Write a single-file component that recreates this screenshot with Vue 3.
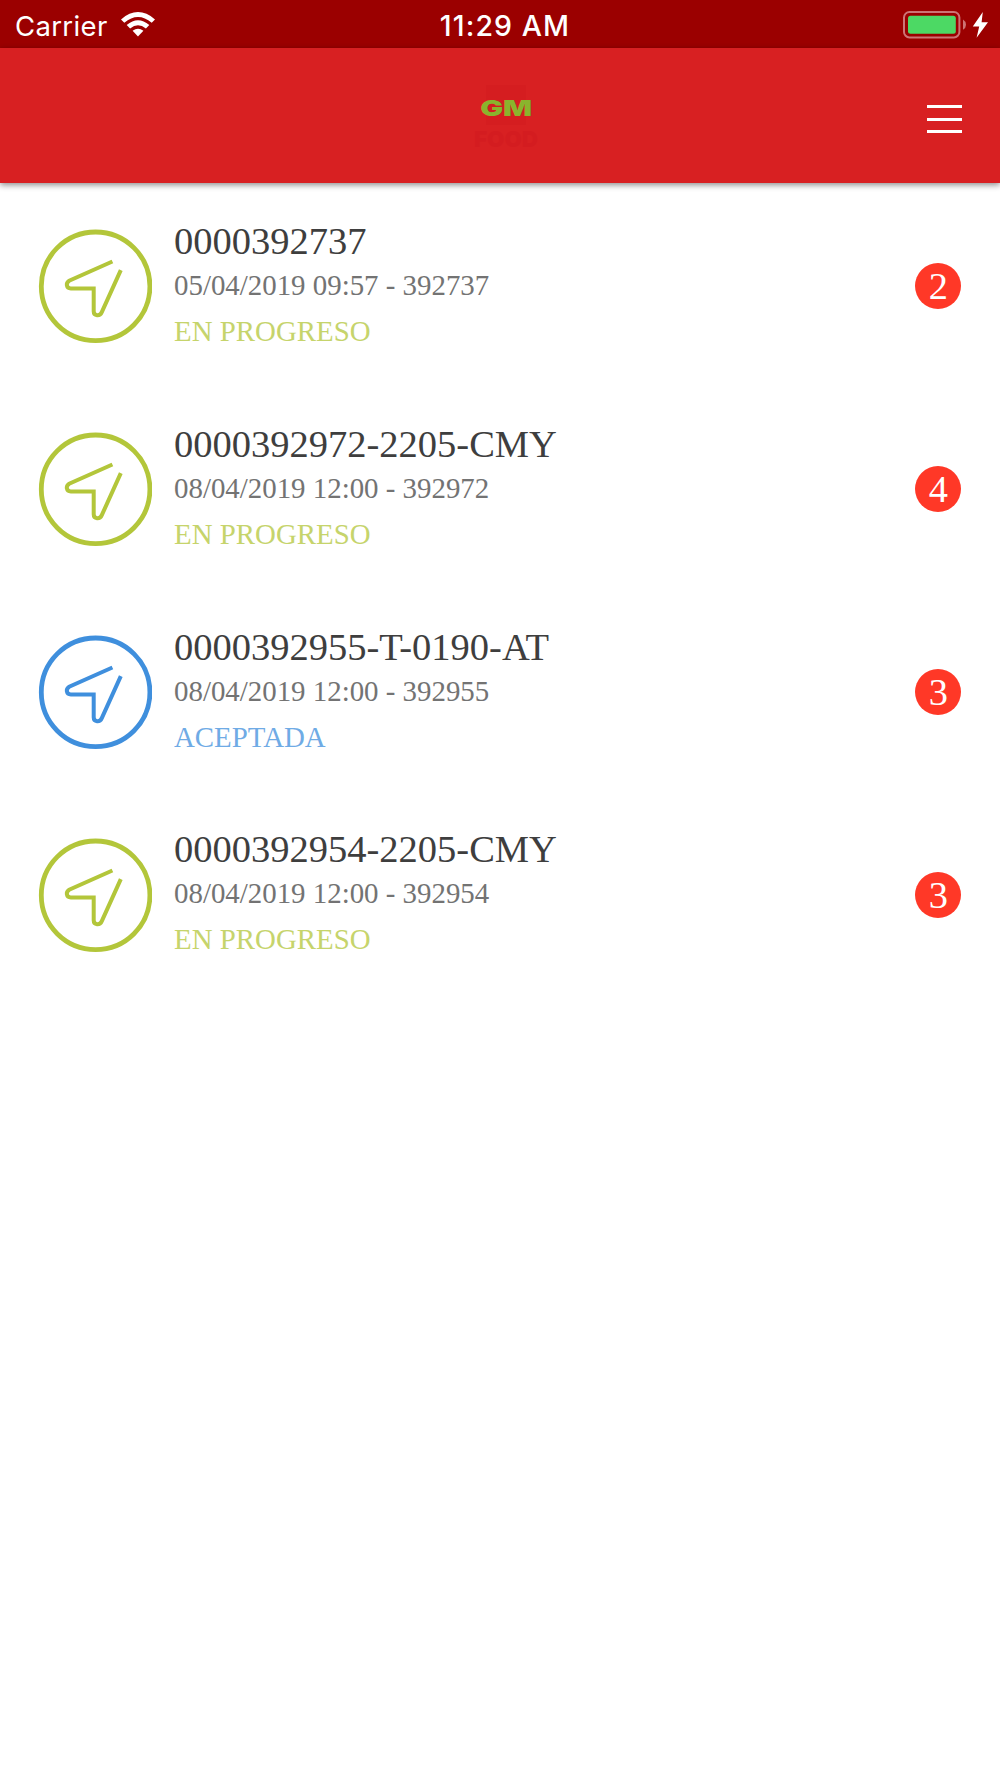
<template>
	<div class='screen'>
		<div class='statusBar'>
			<div class='carrier'>
				<span class='carrierName'>Carrier</span>
				<svg class='wifi' viewBox="0 0 34 25" width="34" height="25">
					<path d="M0 7.4Q17 -7.2 34 7.4L30.7 10.8Q17 -1 3.3 10.8Z" />
					<path d="M5.7 13Q17 3.4 28.3 13L24.9 16.4Q17 10 9.1 16.4Z" />
					<path d="M11.6 18.8Q17 14.9 22.4 18.8L17 24.5Z" />
				</svg>
			</div>
			<div class='time'>11:29 AM</div>
			<div class='power'>
				<svg viewBox="0 0 86 28" width="86" height="28">
					<rect x="1" y="1" width="55.4" height="25.4" rx="5.5" class='batteryShell' />
					<rect x="5" y="4.8" width="47.8" height="18" rx="2.5" class='batteryLevel' />
					<path d="M60 8.6Q63 10.5 63 13.7T60 18.8Z" class='batteryTip' />
					<path d="M79.8 1L69.8 15.5H76.2L73.6 26.8L85 11.2H78.6Z" fill="#fff" />
				</svg>
			</div>
		</div>

		<header class='header'>
			<svg class='logo' viewBox="0 0 70 80" width="70" height="80">
				<rect x="15" y="5" width="40" height="40" class='logoBox' />
				<text x="9.2" y="36" textLength="52" lengthAdjust="spacingAndGlyphs" class='logoMain'>GM</text>
				<text x="3" y="67" textLength="64" lengthAdjust="spacingAndGlyphs" class='logoSub'>FOOD</text>
			</svg>
			<button class='menu' aria-label="Menu">
				<span></span>
				<span></span>
				<span></span>
			</button>
		</header>

		<main class='list'>
			<div v-for='order in orders' :key='order.id' class='row' :class='order.state'>
				<svg class='icon' viewBox="-0.6 -0.3 114 114" width="114" height="114">
					<circle cx="57" cy="57" r="54.3" stroke-width="4.8" />
					<path d="M73.8 32.2L30.6 51.4C26.9 53.8 27.6 59.1 32.2 59.1H55.1V82C55.1 86.8 61.2 87.3 63.2 82.8L82.2 40.9" stroke-width="4" />
				</svg>
				<div class='info'>
					<div class='title'>{{order.title}}</div>
					<div class='date'>{{order.date}} - {{order.id}}</div>
					<div class='status'>{{labels[order.state]}}</div>
				</div>
				<div class='badge'>{{order.count}}</div>
			</div>
		</main>
	</div>
</template>

<script setup>
	import { ref } from 'vue'

	const labels = {
		progress: 'EN PROGRESO',
		accepted: 'ACEPTADA',
	}

	const orders = ref([
		{ id: '392737', title: '0000392737', date: '05/04/2019 09:57', state: 'progress', count: 2 },
		{ id: '392972', title: '0000392972-2205-CMY', date: '08/04/2019 12:00', state: 'progress', count: 4 },
		{ id: '392955', title: '0000392955-T-0190-AT', date: '08/04/2019 12:00', state: 'accepted', count: 3 },
		{ id: '392954', title: '0000392954-2205-CMY', date: '08/04/2019 12:00', state: 'progress', count: 3 },
	])
</script>

<style>
	body{ margin: 0; background: #fff; }
</style>

<style scoped>
	.screen{
		min-height: 1778px;
		background: #fff;
		font-family: "Liberation Serif", "Times New Roman", serif;
	}
	.statusBar{
		display: grid;
		grid-template-columns: 1fr auto 1fr;
		align-items: center;
		height: 48px;
		box-sizing: border-box;
		padding: 3px 11px 0 15px;
		background: #9b0000;
		color: #fff;
		font-family: Inter, Roboto, sans-serif;
		font-size: 27.5px;
		line-height: 44px;
	}
	.carrier{ display: flex; align-items: center; gap: 13px; }
	.carrierName{ letter-spacing: 0.35px; }
	.wifi{ fill: #fff; margin-top: -2px; }
	.time{
		margin-left: 6px;
		font-size: 28.5px;
		font-weight: 500;
		letter-spacing: 1.1px;
	}
	.power{ display: flex; justify-content: flex-end; margin-top: -1px; }
	.batteryShell{ fill: none; stroke: #cd7475; stroke-width: 2; }
	.batteryLevel{ fill: #4cd964; }
	.batteryTip{ fill: #cd7475; }

	.header{
		display: grid;
		grid-template-columns: 1fr 70px 1fr;
		height: 135.4px;
		box-sizing: border-box;
		padding: 32px 38px 0 49px;
		background: #d82022;
		box-shadow: 0 2px 6px rgba(0, 0, 0, 0.45);
	}
	.logo{ grid-column: 2; }
	.logoBox{ fill: #d51d20; }
	.logoMain{
		fill: #8ab42d;
		font: 900 22px Inter, sans-serif;
	}
	.logoSub{
		fill: #d41c20;
		font: 900 22px Inter, sans-serif;
	}
	.menu{
		display: flex;
		flex-direction: column;
		justify-self: end;
		gap: 9.6px;
		width: 35px;
		margin-top: 25px;
		padding: 0;
		border: 0;
		background: none;
	}
	.menu span{ height: 3px; background: #fff; }

	.list{ padding-top: 1px; }
	.row{
		display: flex;
		align-items: center;
		height: 202.9px;
		padding: 0 38.6px 0 38px;
	}
	.icon{
		flex: none;
		fill: none;
		stroke: currentColor;
	}
	.info{ flex: 1; padding: 1.8px 0 0 22px; }
	.title{
		color: #3e3e3e;
		font-size: 38.5px;
		line-height: 44px;
	}
	.date{
		color: #737373;
		font-size: 28.88px;
		line-height: 45px;
	}
	.status{
		font-size: 28.88px;
		line-height: 47px;
		opacity: 0.75;
	}
	.progress{ color: #b3c63a; }
	.accepted{ color: #3f8fdd; }
	.badge{
		width: 46px;
		height: 46px;
		border-radius: 50%;
		background: #ff3827;
		color: #fff;
		font-size: 38.4px;
		line-height: 46px;
		text-align: center;
	}
</style>
